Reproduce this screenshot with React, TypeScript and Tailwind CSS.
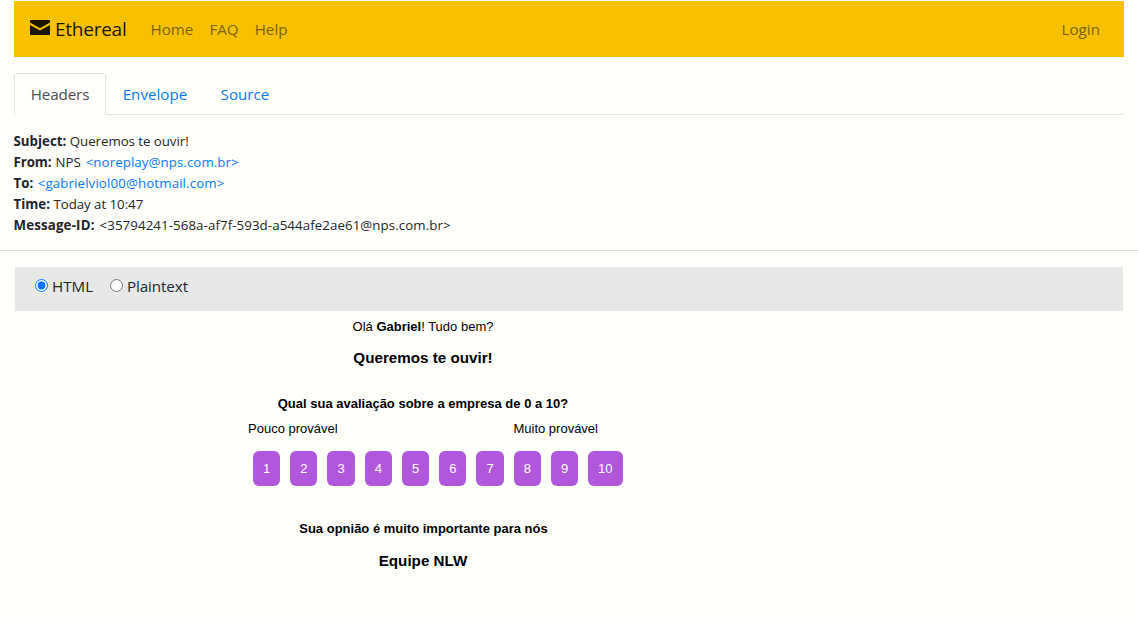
import { useState } from "react";

const scores = [1, 2, 3, 4, 5, 6, 7, 8, 9, 10];

function Navbar() {
  return (
    <nav className="flex h-14 items-center bg-[#f7c100] pr-6 pl-4 text-[15.2px] text-[#7c6104]">
      <a href="#" className="flex items-center text-[#1b1603]">
        <svg viewBox="0 0 20 15" className="mt-[-4px] h-[15px] w-5" fill="currentColor">
          <path d="M0 0h20v2.6l-10 5.6L0 2.6z" />
          <path d="M0 5l10 5.4L20 5v10H0z" />
        </svg>
        <span className="ml-[5px] pt-px text-[19px] tracking-[-0.25px]">Ethereal</span>
      </a>
      <div className="ml-6 flex flex-1 gap-4">
        <a href="#">Home</a>
        <a href="#">FAQ</a>
        <a href="#">Help</a>
      </div>
      <a href="#">Login</a>
    </nav>
  );
}

function Tabs() {
  return (
    <div className="mt-4 flex h-[42px] border-b border-[#dee2e0] text-[15.2px] text-[#047bff]">
      <a href="#" className="-mb-px flex h-[42px] w-[92px] items-center justify-center rounded-t border border-b-0 border-[#dee2e0] bg-[#fffffb] tracking-[-0.1px] text-[#495057]">
        Headers
      </a>
      <a href="#" className="flex w-[98px] items-center justify-center pt-[2px]">Envelope</a>
      <a href="#" className="flex w-[82px] items-center justify-center pt-[2px]">Source</a>
    </div>
  );
}

function MessageHeaders() {
  return (
    <div className="mt-4 ml-[-0.5px] text-[13.3px] leading-[21px] whitespace-nowrap">
      <div><b>Subject:</b> <span className="tracking-[-0.05px]">Queremos te ouvir!</span></div>
      <div><b className="tracking-[-0.1px]">From:</b> <span className="ml-[0.5px]">NPS</span> <a href="#" className="ml-[1.5px] tracking-[0.07px] text-[#047bff]">&lt;noreplay@nps.com.br&gt;</a></div>
      <div><b>To:</b> <a href="#" className="ml-px tracking-[0.12px] text-[#047bff]">&lt;gabrielviol00@hotmail.com&gt;</a></div>
      <div><b>Time:</b> <span className="tracking-[-0.05px]">Today at 10:47</span></div>
      <div><b className="tracking-[0.16px]">Message-ID:</b> <span className="ml-[1.5px] tracking-[0.08px]">&lt;35794241-568a-af7f-593d-a544afe2ae61@nps.com.br&gt;</span></div>
    </div>
  );
}

function ViewSwitch() {
  const [view, setView] = useState("html");
  return (
    <div className="mx-[15px] mt-4 flex h-11 gap-4 bg-[#e7e9e8] pt-[7px] pl-5 text-[15.2px] leading-6">
      <label className="flex w-[59px] gap-1">
        <input type="radio" name="view" className="mt-[5px] h-[13px] w-[13px] shrink-0" checked={view === "html"} onChange={() => setView("html")} />
        HTML
      </label>
      <label className="flex gap-1 tracking-[-0.1px]">
        <input type="radio" name="view" className="mt-[5px] h-[13px] w-[13px] shrink-0" checked={view === "plain"} onChange={() => setView("plain")} />
        Plaintext
      </label>
    </div>
  );
}

function MailBody() {
  return (
    <div className="ml-[23px] flex w-[800px] flex-col items-center pt-2 font-['Liberation_Sans',Arial,sans-serif] text-[13px] leading-[15px] text-black">
      <p>Olá <b>Gabriel</b>! Tudo bem?</p>
      <h3 className="mt-[15px] text-[15.2px] leading-[17px] font-bold">Queremos te ouvir!</h3>
      <p className="mt-[30px] font-bold">Qual sua avaliação sobre a empresa de 0 a 10?</p>
      <div className="mt-[10px] flex w-[350px] justify-between">
        <span>Pouco provável</span>
        <span>Muito provável</span>
      </div>
      <div className="mt-[15px] ml-[29.6px] flex gap-[10px]">
        {scores.map((n) => (
          <a key={n} href="#" className="rounded-md bg-[#b057db] p-[10px] text-white">{n}</a>
        ))}
      </div>
      <p className="mt-[35px] ml-px font-bold">Sua opnião é muito importante para nós</p>
      <h3 className="mt-4 text-[15.2px] leading-[17px] font-bold">Equipe NLW</h3>
    </div>
  );
}

export default function App() {
  return (
    <div className="min-h-screen bg-[#fffffb] pt-px font-['Open_Sans','Noto_Sans',sans-serif] text-[#212529]">
      <div className="mr-[14px] ml-[14px]">
        <Navbar />
        <Tabs />
        <MessageHeaders />
      </div>
      <hr className="mt-[14px] border-[#dfdde2]" />
      <ViewSwitch />
      <MailBody />
    </div>
  );
}
